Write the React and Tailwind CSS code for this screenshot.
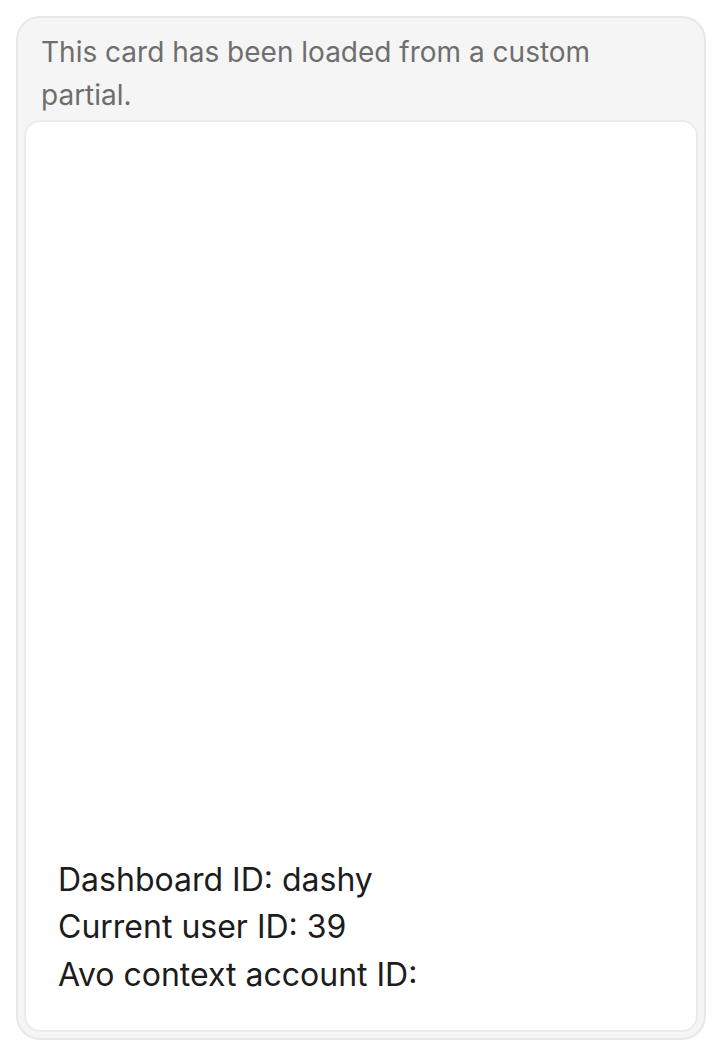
export default function App() {
  return (
    <div className="min-h-screen bg-white p-4" style={{ fontFamily: "Inter, 'Noto Sans', sans-serif" }}>
      <div className="flex h-[1024px] flex-col rounded-[24px] border-2 border-[#e8e8e8] bg-[#f5f5f5] px-[6px] pb-[6px]">
        <p className="px-[17px] pt-[13px] pb-[3px] text-[28px] leading-[43px] text-[#6e6e6e]">
          This card has been loaded from a custom partial.
        </p>
        <div className="flex flex-1 flex-col justify-end rounded-[16px] border-2 border-[#ebebeb] bg-white px-[32px] pb-[32px]">
          <div className="text-[32px] leading-[47.5px] text-[#1c1c1c]">
            <p>Dashboard ID: dashy</p>
            <p>Current user ID: 39</p>
            <p>Avo context account ID:</p>
          </div>
        </div>
      </div>
    </div>
  );
}
